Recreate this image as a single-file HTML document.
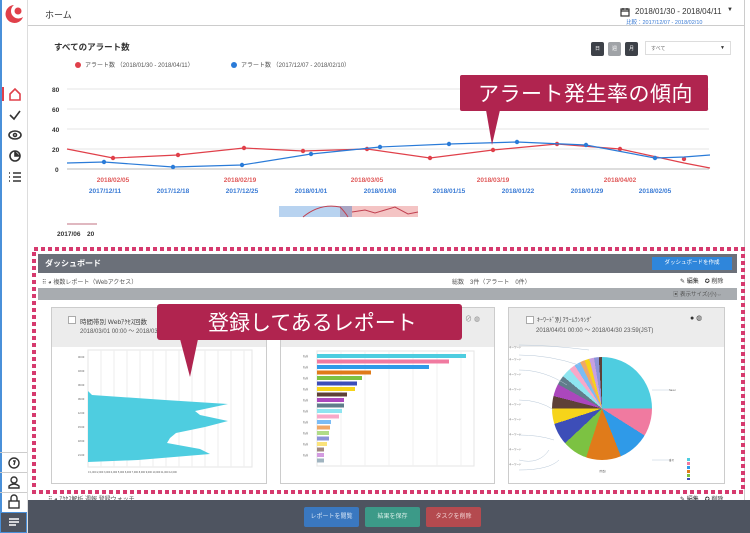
<!DOCTYPE html>
<html><head><meta charset="utf-8">
<style>
*{margin:0;padding:0;box-sizing:border-box}
body{width:750px;height:533px;overflow:hidden;background:#fff;font-family:"Liberation Sans","Noto Sans CJK JP",sans-serif;position:relative;color:#333}
.a{position:absolute}
.t{position:absolute;white-space:nowrap}
</style></head><body>
<!-- sidebar -->
<div class="a" style="left:0;top:0;width:2px;height:533px;background:#4a90d9"></div>
<div class="a" style="left:27px;top:0;width:1px;height:533px;background:#ddd"></div>
<svg class="a" style="left:3px;top:3px" width="22" height="22" viewBox="0 0 22 22"><path d="M11 2A9 9 0 1 0 20 14A6 6 0 0 1 11 2Z" fill="#e0404a"/><circle cx="15" cy="8" r="3.5" fill="#e0404a"/></svg>
<div class="a" style="left:2px;top:87px;width:2px;height:14px;background:#e0404a"></div>
<svg class="a" style="left:7px;top:87px" width="16" height="100" viewBox="0 0 16 100" fill="none" stroke="#333" stroke-width="1.6">
<path d="M3 7L8 2L13 7V13H3Z" stroke="#e0404a"/>
<path d="M3 28L7 32L13 24"/>
<ellipse cx="8" cy="48" rx="6" ry="4"/><circle cx="8" cy="48" r="1.5"/>
<circle cx="8" cy="69" r="5"/><path d="M8 64V69H13" fill="#333"/>
<path d="M6 86H14M6 90H14M6 94H14M2 86H3M2 90H3M2 94H3"/>
</svg>
<div class="a" style="left:0;top:452px;width:27px;height:1px;background:#ccc"></div>
<div class="a" style="left:0;top:472px;width:27px;height:1px;background:#ccc"></div>
<div class="a" style="left:0;top:492px;width:27px;height:1px;background:#ccc"></div>
<svg class="a" style="left:7px;top:456px" width="14" height="55" viewBox="0 0 14 55" fill="none" stroke="#333" stroke-width="1.4">
<circle cx="7" cy="7" r="5"/><path d="M6 5H8L7 9"/>
<circle cx="7" cy="24" r="3"/><path d="M2 32H12V30Q7 26 2 30Z"/>
<rect x="2" y="45" width="10" height="7"/><path d="M4 45V42A3 3 0 0 1 10 42V45"/>
</svg>
<!-- header -->
<div class="t" style="left:45px;top:8px;font-size:9px">ホーム</div>
<div class="a" style="left:28px;top:25px;width:717px;height:1px;background:#ccc"></div>
<div class="a" style="left:744px;top:0;width:1px;height:500px;background:#ccc"></div>
<svg class="a" style="left:620px;top:7px" width="10" height="10" viewBox="0 0 10 10" fill="none" stroke="#333" stroke-width="1.2"><rect x="1" y="2" width="8" height="7"/><path d="M1 4H9M3 1V3M7 1V3"/></svg>
<div class="t" style="left:635px;top:7px;font-size:8px">2018/01/30 - 2018/04/11</div>
<div class="t" style="left:727px;top:7px;font-size:6px">▼</div>
<div class="t" style="left:626px;top:18px;font-size:5.5px;color:#3a7bd5">比較：2017/12/07 - 2018/02/10</div>
<!-- chart title -->
<div class="t" style="left:54px;top:41px;font-size:8.5px;font-weight:bold">すべてのアラート数</div>
<div class="a" style="left:591px;top:42px;width:13px;height:14px;background:#3d4148;border-radius:2px;color:#fff;font-size:5px;text-align:center;line-height:14px">日</div>
<div class="a" style="left:608px;top:42px;width:13px;height:14px;background:#a0a3a7;border-radius:2px;color:#fff;font-size:5px;text-align:center;line-height:14px">週</div>
<div class="a" style="left:625px;top:42px;width:13px;height:14px;background:#3d4148;border-radius:2px;color:#fff;font-size:5px;text-align:center;line-height:14px">月</div>
<div class="a" style="left:645px;top:41px;width:86px;height:14px;border:1px solid #ddd;font-size:5px;padding:3px 5px;color:#666">すべて<span style="float:right;font-size:5px;color:#333">▼</span></div>
<svg class="a" style="left:0;top:0" width="750" height="250">
<g font-size="6" fill="#555"><circle cx="78" cy="65" r="3" fill="#e0404a"/><text x="85" y="67">アラート数 （2018/01/30 - 2018/04/11）</text>
<circle cx="234" cy="65" r="3" fill="#2a7bd8"/><text x="241" y="67">アラート数 （2017/12/07 - 2018/02/10）</text></g>
<g stroke="#e6e6e6" stroke-width="1"><line x1="67" y1="89" x2="709" y2="89"/><line x1="67" y1="109" x2="709" y2="109"/><line x1="67" y1="129" x2="709" y2="129"/><line x1="67" y1="149" x2="709" y2="149"/></g>
<line x1="67" y1="169" x2="709" y2="169" stroke="#bbb"/>
<g font-size="6.5" font-weight="bold" fill="#333"><text x="52" y="92">80</text><text x="52" y="112">60</text><text x="52" y="132">40</text><text x="52" y="152">20</text><text x="55" y="172">0</text></g>
<polyline fill="none" stroke="#e0404a" stroke-width="1.2" points="67,149 113,158 178,155 244,148 303,151 367,149 430,158 493,150 557,144 620,149 684,163 710,168"/>
<g fill="#e0404a"><circle cx="113" cy="158" r="2.2"/><circle cx="178" cy="155" r="2.2"/><circle cx="244" cy="148" r="2.2"/><circle cx="303" cy="151" r="2.2"/><circle cx="367" cy="149" r="2.2"/><circle cx="430" cy="158" r="2.2"/><circle cx="493" cy="150" r="2.2"/><circle cx="557" cy="144" r="2.2"/><circle cx="620" cy="149" r="2.2"/><circle cx="684" cy="159" r="2.2"/></g>
<polyline fill="none" stroke="#2a7bd8" stroke-width="1.2" points="67,163 104,162 173,167 242,165 311,154 380,147 449,144 517,142 586,145 655,158 684,157 710,155"/>
<g fill="#2a7bd8"><circle cx="104" cy="162" r="2.2"/><circle cx="173" cy="167" r="2.2"/><circle cx="242" cy="165" r="2.2"/><circle cx="311" cy="154" r="2.2"/><circle cx="380" cy="147" r="2.2"/><circle cx="449" cy="144" r="2.2"/><circle cx="517" cy="142" r="2.2"/><circle cx="586" cy="145" r="2.2"/><circle cx="655" cy="158" r="2.2"/></g>
<g font-size="6.5" font-weight="bold" fill="#e05a5a" text-anchor="middle"><text x="113" y="182">2018/02/05</text><text x="240" y="182">2018/02/19</text><text x="367" y="182">2018/03/05</text><text x="493" y="182">2018/03/19</text><text x="620" y="182">2018/04/02</text></g>
<g font-size="6.5" font-weight="bold" fill="#3a7bd5" text-anchor="middle"><text x="105" y="193">2017/12/11</text><text x="173" y="193">2017/12/18</text><text x="242" y="193">2017/12/25</text><text x="311" y="193">2018/01/01</text><text x="380" y="193">2018/01/08</text><text x="449" y="193">2018/01/15</text><text x="518" y="193">2018/01/22</text><text x="587" y="193">2018/01/29</text><text x="655" y="193">2018/02/05</text></g>
<rect x="279" y="206" width="62" height="11" fill="#b8d3f0"/><rect x="340" y="206" width="12" height="11" fill="#a9a6c4"/><rect x="352" y="206" width="66" height="11" fill="#f4c4c4"/>
<path d="M303 217Q320 203 340 207Q345 212 348 217M352 212L365 210L375 213L395 207L408 214L418 212" fill="none" stroke="#c04050" stroke-width="1"/>
<line x1="67" y1="224" x2="97" y2="224" stroke="#c07080" stroke-width="1"/>
<text x="57" y="236" font-size="6.5" font-weight="bold" fill="#333">2017/06　20</text>
</svg>
<!-- callout 1 -->
<div class="a" style="left:460px;top:75px;width:248px;height:36px;background:#b0244f;border-radius:2px"></div>
<svg class="a" style="left:484px;top:110px" width="18" height="36"><path d="M2 0L16 0L8 35Z" fill="#b0244f"/></svg>
<div class="t" style="left:478px;top:78px;font-size:21px;color:#fff;letter-spacing:0.5px">アラート発生率の傾向</div>
<!-- dashboard -->
<div class="a" style="left:38px;top:254px;width:700px;height:240px;background:#fff"></div>
<div class="a" style="left:38px;top:254px;width:699px;height:19px;background:#6b7079"></div>
<div class="t" style="left:45px;top:258px;font-size:8px;font-weight:bold;color:#fff">ダッシュボード</div>
<div class="a" style="left:652px;top:257px;width:80px;height:13px;background:#2f86db;color:#fff;font-size:5.5px;text-align:center;line-height:13px">ダッシュボードを作成</div>
<div class="t" style="left:42px;top:277px;font-size:6px;color:#555">⠿ ◕ 複数レポート（Webアクセス）</div>
<div class="t" style="left:452px;top:277px;font-size:6px;color:#555">総数　3件（アラート　0件）</div>
<div class="t" style="left:680px;top:276px;font-size:6px;color:#333">✎ 編集　✪ 削除</div>
<div class="a" style="left:38px;top:288px;width:699px;height:12px;background:#a8acb0"></div>
<div class="t" style="left:673px;top:290px;font-size:5.5px;color:#555">▣ 表示サイズ(小)⇔</div>
<!-- card1 -->
<div class="a" style="left:51px;top:307px;width:216px;height:177px;border:1px solid #ccc;background:#fff"></div>
<div class="a" style="left:52px;top:308px;width:214px;height:39px;background:#ececec"></div>
<div class="a" style="left:68px;top:316px;width:8px;height:8px;border:1px solid #aaa;background:#fff"></div>
<div class="t" style="left:80px;top:316px;font-size:6.5px;color:#444">時間帯別 Webｱｸｾｽ回数</div>
<div class="t" style="left:80px;top:326px;font-size:6px;color:#555">2018/03/01 00:00 ～ 2018/03/31</div>
<svg class="a" style="left:52px;top:348px" width="214" height="135" viewBox="52 348 214 135">
<rect x="88" y="350" width="164" height="117" fill="none" stroke="#e5e5e5"/>
<g stroke="#eee"><line x1="101" y1="350" x2="101" y2="467"/><line x1="114" y1="350" x2="114" y2="467"/><line x1="127" y1="350" x2="127" y2="467"/><line x1="140" y1="350" x2="140" y2="467"/><line x1="153" y1="350" x2="153" y2="467"/><line x1="166" y1="350" x2="166" y2="467"/><line x1="179" y1="350" x2="179" y2="467"/><line x1="192" y1="350" x2="192" y2="467"/><line x1="205" y1="350" x2="205" y2="467"/><line x1="218" y1="350" x2="218" y2="467"/><line x1="231" y1="350" x2="231" y2="467"/><line x1="244" y1="350" x2="244" y2="467"/></g>
<polygon fill="#4ecde0" points="88,391 92,395 165,400 228,404 195,411 200,415 228,421 205,427 176,433 170,438 167,443 200,449 210,454 138,460 88,462"/>
<g font-size="2.5" fill="#555"><text x="78" y="358">00:00</text><text x="78" y="372">03:00</text><text x="78" y="386">06:00</text><text x="78" y="400">09:00</text><text x="78" y="414">12:00</text><text x="78" y="428">15:00</text><text x="78" y="442">18:00</text><text x="78" y="456">21:00</text><text x="88" y="473">0 1,000 2,000 3,000 4,000 5,000 6,000 7,000 8,000 9,000 10,000 11,000 12,000</text></g>
</svg>
<!-- card2 -->
<div class="a" style="left:280px;top:307px;width:215px;height:177px;border:1px solid #ccc;background:#fff"></div>
<div class="a" style="left:281px;top:308px;width:213px;height:39px;background:#ececec"></div>
<div class="t" style="left:465px;top:314px;font-size:7px;color:#888">⊘ ◍</div>
<svg class="a" style="left:281px;top:348px" width="213" height="135" viewBox="281 348 213 135">
<rect x="317" y="351" width="157" height="115" fill="none" stroke="#e5e5e5"/>
<g stroke="#f0f0f0"><line x1="341" y1="351" x2="341" y2="466"/><line x1="365" y1="351" x2="365" y2="466"/><line x1="389" y1="351" x2="389" y2="466"/><line x1="413" y1="351" x2="413" y2="466"/><line x1="437" y1="351" x2="437" y2="466"/><line x1="461" y1="351" x2="461" y2="466"/></g>
<g>
<rect x="317" y="354" width="149" height="4" fill="#4ecde0"/><rect x="317" y="359.5" width="132" height="4" fill="#f07aa0"/><rect x="317" y="365" width="112" height="4" fill="#2f9ae8"/><rect x="317" y="370.5" width="54" height="4" fill="#e07b1a"/><rect x="317" y="376" width="45" height="4" fill="#7cc242"/><rect x="317" y="381.5" width="40" height="4" fill="#3d4eb8"/><rect x="317" y="387" width="38" height="4" fill="#f6d41a"/><rect x="317" y="392.5" width="30" height="4" fill="#5d4037"/><rect x="317" y="398" width="27" height="4" fill="#ab47bc"/><rect x="317" y="403.5" width="27" height="4" fill="#607d8b"/><rect x="317" y="409" width="25" height="4" fill="#8ee5f0"/><rect x="317" y="414.5" width="22" height="4" fill="#f8a8c8"/><rect x="317" y="420" width="14" height="4" fill="#7bbcf5"/><rect x="317" y="425.5" width="13" height="4" fill="#f0a868"/><rect x="317" y="431" width="12" height="4" fill="#b0dc88"/><rect x="317" y="436.5" width="12" height="4" fill="#8c94d8"/><rect x="317" y="442" width="10" height="4" fill="#fae27a"/><rect x="317" y="447.5" width="7" height="4" fill="#a1887f"/><rect x="317" y="453" width="7" height="4" fill="#d39be0"/><rect x="317" y="458.5" width="7" height="4" fill="#a0b4c0"/>
</g>
<g font-size="2.5" fill="#555"><text x="303" y="357">名前</text><text x="303" y="368">名前</text><text x="303" y="379">名前</text><text x="303" y="390">名前</text><text x="303" y="401">名前</text><text x="303" y="412">名前</text><text x="303" y="423">名前</text><text x="303" y="434">名前</text><text x="303" y="445">名前</text><text x="303" y="456">名前</text></g>
</svg>
<!-- card3 -->
<div class="a" style="left:508px;top:307px;width:217px;height:177px;border:1px solid #ccc;background:#fff"></div>
<div class="a" style="left:509px;top:308px;width:215px;height:39px;background:#ececec"></div>
<div class="a" style="left:526px;top:316px;width:8px;height:8px;border:1px solid #aaa;background:#fff"></div>
<div class="t" style="left:537px;top:315px;font-size:6px;color:#444">ｷｰﾜｰﾄﾞ別 ｱﾗｰﾑﾗﾝｷﾝｸﾞ</div>
<div class="t" style="left:536px;top:325px;font-size:6px;color:#555">2018/04/01 00:00 ～ 2018/04/30 23:59(JST)</div>
<div class="t" style="left:690px;top:314px;font-size:7px;color:#333">● ◍</div>
<div class="a" style="left:552px;top:357px;width:100px;height:103px;border-radius:50%;background:conic-gradient(#4ecde0 0 25%,#f07aa0 0 34%,#2f9ae8 0 44%,#e07b1a 0 55%,#7cc242 0 63%,#3d4eb8 0 70%,#f6d41a 0 75%,#5d4037 0 79%,#ab47bc 0 83%,#607d8b 0 86%,#8ee5f0 0 89%,#f8a8c8 0 91%,#7bbcf5 0 93%,#f0a868 0 94.5%,#f6d41a 0 96%,#c8a0e0 0 97.5%,#8c94d8 0 99%,#5d4037 0 100%)"></div>
<svg class="a" style="left:509px;top:340px" width="215" height="140">
<g stroke="#b8c8d8" stroke-width="0.5" fill="none"><path d="M10 5Q40 5 80 10M10 15Q40 15 70 25M10 30Q35 30 58 45M10 60Q30 60 45 70M10 95Q30 95 45 100M10 120Q30 125 40 110M10 130Q40 130 50 120"/><path d="M143 50H160M143 120H160M140 147H160"/></g>
<g font-size="2.5" fill="#555"><text x="0" y="8">キーワード</text><text x="0" y="20">キーワード</text><text x="0" y="35">キーワード</text><text x="0" y="50">キーワード</text><text x="0" y="65">キーワード</text><text x="0" y="80">キーワード</text><text x="0" y="95">キーワード</text><text x="0" y="110">キーワード</text><text x="0" y="125">キーワード</text><text x="160" y="51">Naver</text><text x="160" y="121">番号</text><text x="90" y="132">(件数)</text></g>
<g><rect x="178" y="118" width="3" height="3" fill="#4ecde0"/><rect x="178" y="122" width="3" height="3" fill="#f07aa0"/><rect x="178" y="126" width="3" height="3" fill="#2f9ae8"/><rect x="178" y="130" width="3" height="3" fill="#e07b1a"/><rect x="178" y="134" width="3" height="3" fill="#7cc242"/><rect x="178" y="138" width="3" height="3" fill="#3d4eb8"/><rect x="178" y="142" width="3" height="3" fill="#f6d41a"/><rect x="178" y="146" width="3" height="3" fill="#5d4037"/><rect x="178" y="150" width="3" height="3" fill="#ab47bc"/><rect x="178" y="154" width="3" height="3" fill="#607d8b"/></g>
</svg>
<div class="t" style="left:48px;top:494px;font-size:6px;color:#555">⠿ ◕ ｱｸｾｽ解析 週報 登録ウォッチ</div>
<div class="t" style="left:680px;top:494px;font-size:6px;color:#333">✎ 編集　✪ 削除</div>
<!-- callout 2 -->
<div class="a" style="left:157px;top:304px;width:305px;height:36px;background:#b0244f;border-radius:3px"></div>
<svg class="a" style="left:178px;top:339px" width="22" height="40"><path d="M2 0L20 0L12 38Z" fill="#b0244f"/></svg>
<div class="t" style="left:208px;top:307px;font-size:21px;color:#fff">登録してあるレポート</div>
<!-- dashed border -->
<svg class="a" style="left:0;top:0" width="750" height="533"><rect x="34" y="249" width="709" height="243" fill="none" stroke="#d63a6e" stroke-width="4" stroke-dasharray="4 3"/></svg>
<!-- bottom bar -->
<div class="a" style="left:28px;top:500px;width:722px;height:33px;background:#4e5460"></div>
<div class="a" style="left:0px;top:512px;width:27px;height:21px;background:#4e5460;border:1px solid #4a90d9"></div>
<svg class="a" style="left:7px;top:517px" width="14" height="12" fill="none" stroke="#fff" stroke-width="1.4"><path d="M2 2H12M2 5H12M2 8H9"/></svg>
<div class="a" style="left:304px;top:507px;width:55px;height:20px;background:#3a78c0;border-radius:2px;color:#d8e6f6;font-size:6px;text-align:center;line-height:20px">レポートを閲覧</div>
<div class="a" style="left:365px;top:507px;width:55px;height:20px;background:#3c9a88;border-radius:2px;color:#d8efe8;font-size:6px;text-align:center;line-height:20px">結果を保存</div>
<div class="a" style="left:426px;top:507px;width:55px;height:20px;background:#b44a4f;border-radius:2px;color:#f4d8d8;font-size:6px;text-align:center;line-height:20px">タスクを削除</div>
</body></html>
